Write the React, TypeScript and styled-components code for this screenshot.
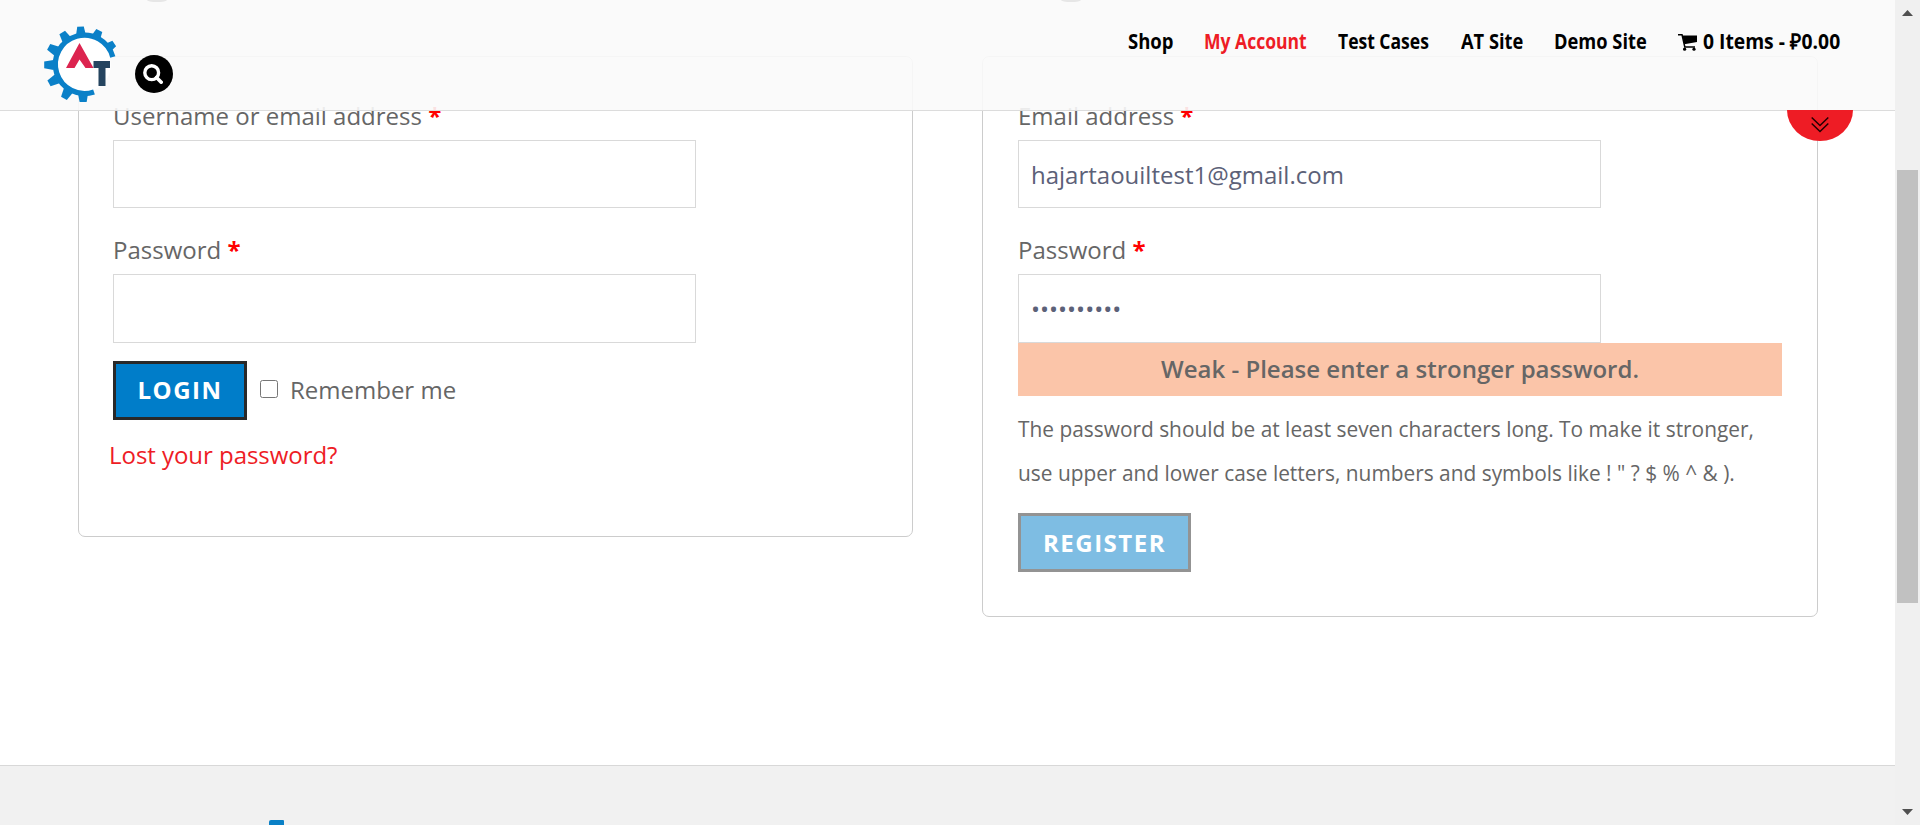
import React from "react";
import styled, { createGlobalStyle } from "styled-components";

const Global = createGlobalStyle`
  * { box-sizing: border-box; }
  body { margin: 0; background: #fff; overflow: hidden; font-family: "Open Sans", sans-serif; color: #666; }
`;

const Shell = styled.div`
  display: flex;
  height: 825px;
`;

const Page = styled.div`
  position: relative;
  flex: 1;
  display: flex;
  flex-direction: column;
  overflow: hidden;
`;

const Header = styled.header`
  position: absolute;
  inset: 0 0 auto 0;
  height: 111px;
  z-index: 2;
  display: flex;
  justify-content: space-between;
  padding: 0 55px 0 43px;
  background: rgba(249, 249, 249, 0.9);
  border-bottom: 1px solid #dcdcdc;
`;

const Brand = styled.div`
  display: flex;
  align-items: flex-start;
  gap: 16px;
  padding-top: 26px;
`;

const SearchButton = styled.button`
  display: flex;
  align-items: center;
  justify-content: center;
  width: 38px;
  height: 38px;
  margin-top: 29px;
  padding: 0 3px 0 0;
  border: 0;
  border-radius: 50%;
  background: #000;
`;

const Nav = styled.nav`
  display: flex;
  height: 82px;
  align-items: center;
  gap: 31px;
`;

const NavLink = styled.a<{ $width: number; $active?: boolean }>`
  display: flex;
  align-items: center;
  gap: 6px;
  width: ${(p) => p.$width}px;
  white-space: nowrap;
  font: 700 21.5px "Open Sans", sans-serif;
  color: ${(p) => (p.$active ? "#ee1c25" : "#000")};
  svg { flex-shrink: 0; margin-top: 2px; }
`;

const NavText = styled.span<{ $scale: number }>`
  display: inline-block;
  padding-bottom: 2px;
  transform: scaleX(${(p) => p.$scale});
  transform-origin: left center;
`;

const Tab = styled.button`
  position: absolute;
  z-index: 3;
  top: 110px;
  right: 42px;
  display: flex;
  justify-content: center;
  width: 66px;
  height: 31px;
  padding: 6px 0 0;
  border: 0;
  border-radius: 0 0 33px 33px / 0 0 31px 31px;
  background: #ee1c25;
`;

const Headings = styled.div`
  display: flex;
  flex-shrink: 0;
  height: 56px;
  padding-left: 147px;
  gap: 894px;
`;

const Descender = styled.span`
  width: 20px;
  height: 2px;
  border-radius: 0 0 10px 10px / 0 0 2px 2px;
  background: #333;
`;

const Columns = styled.main`
  display: grid;
  flex-shrink: 0;
  grid-template-columns: 835px 836px;
  align-items: start;
  column-gap: 69px;
  padding: 0 77px 0 78px;
  height: 709px;
`;

const Card = styled.form<{ $height: number; $inset: number }>`
  display: flex;
  flex-direction: column;
  height: ${(p) => p.$height}px;
  padding: 36px 35px 0 ${(p) => p.$inset}px;
  border: 1px solid #ccc;
  border-radius: 7px;
`;

const Label = styled.label`
  height: 47px;
  line-height: 45px;
  font-size: 24px;
`;

const Required = styled.b`
  color: #f00;
`;

const Input = styled.input<{ $last?: boolean }>`
  width: 583px;
  height: ${(p) => (p.$last ? 69 : 68)}px;
  margin-bottom: ${(p) => (p.$last ? 0 : 19)}px;
  padding: 0 12px;
  border: 1px solid #d9d9d9;
  border-radius: 0;
  outline: 0;
  background: #fff;
  color: #5c6178;
  font: 24px "Open Sans", sans-serif;
`;

const Actions = styled.div`
  display: flex;
  align-items: center;
  margin-top: 18px;
`;

const Button = styled.button<{ $width: number }>`
  flex-shrink: 0;
  width: ${(p) => p.$width}px;
  height: 59px;
  padding: 0 0 2px;
  border: 3px solid #292929;
  background: #007dc9;
  color: #fff;
  font: 700 24px "Open Sans", sans-serif;
  letter-spacing: 1.5px;
  &:disabled {
    padding: 0;
    opacity: 0.5;
  }
`;

const Checkbox = styled.input`
  width: 18px;
  height: 18px;
  margin: 0 12px 3px 13px;
`;

const Remember = styled.span`
  padding-bottom: 2px;
  font-size: 24px;
`;

const LostLink = styled.a`
  margin: 15px 0 0 -4px;
  line-height: 40px;
  font-size: 24px;
  letter-spacing: -0.04px;
  color: #ee1c25;
`;

const Strength = styled.div`
  height: 53px;
  line-height: 51px;
  background: #fbc5a9;
  text-align: center;
  font-size: 24px;
  font-weight: 600;
`;

const Hint = styled.p`
  margin: 11px 0 18px;
  height: 88px;
  line-height: 44px;
  font-size: 20.88px;
  white-space: nowrap;
`;

const Footer = styled.footer`
  flex: 1 0 auto;
  padding: 54px 0 0 269px;
  border-top: 1px solid #d8d8d8;
  background: #f1f1f1;
`;

const FooterLogo = styled.div`
  width: 15px;
  height: 5px;
  border-radius: 2px 1px 0 0;
  background: #0a80c6;
`;

const Scrollbar = styled.div`
  display: flex;
  flex-direction: column;
  align-items: center;
  justify-content: space-between;
  width: 25px;
  padding: 10px 0;
  background: #f0f0f0;
`;

const Thumb = styled.div`
  width: 21px;
  height: 433px;
  margin: 154px 0 auto;
  background: #c1c1c1;
`;

const Logo = () => (
  <svg width="76" height="76" viewBox="43 26 76 76">
    <circle cx="82.800" cy="64.800" r="28" fill="#fff" />
    <path
      d="M112.800 57 A29.200 29.200 0 1 0 94 92"
      fill="none"
      stroke="#0a80c8"
      strokeWidth="5.300"
    />
    <g fill="#0a80c8">
      {[-93, -64, -34, -122, -152, 180, 151, 119, 89].map((a) => (
        <path
          key={a}
          transform={`translate(82.500 64.900) rotate(${a})`}
          d="M29 -5 L38.300 -3.300 V3.300 L29 5 Z"
        />
      ))}
    </g>
    <path d="M79.500 43 L93.500 68 H85.500 L79.500 59.500 L74.500 68 H66 Z" fill="#dc244f" />
    <path d="M93.500 61 H110 V68 H105.500 V86 H98.500 V68 H93.500 Z" fill="#25445f" />
  </svg>
);

const SearchIcon = () => (
  <svg width="20" height="20" viewBox="0 0 20 20" fill="none" stroke="#fff">
    <circle cx="8.700" cy="8.700" r="6.900" strokeWidth="3.400" />
    <path d="M13.500 13.500 L18.200 18.200" strokeWidth="3.600" strokeLinecap="round" />
  </svg>
);

const CartIcon = () => (
  <svg width="19" height="17" viewBox="0 0 19 17">
    <path d="M0 0.700 H4 L6.800 13 H17" fill="none" stroke="#000" strokeWidth="1.500" />
    <path d="M4.300 1.500 H19 V8 L6.300 10.200 Z" />
    <circle cx="6.600" cy="15.200" r="1.600" />
    <circle cx="16" cy="15.200" r="1.600" />
  </svg>
);

const Star = () => <Required>*</Required>;

const links = [
  { text: "Shop", width: 45, scale: 0.86 },
  { text: "My Account", width: 103, scale: 0.815, active: true },
  { text: "Test Cases", width: 92, scale: 0.815 },
  { text: "AT Site", width: 62, scale: 0.85 },
  { text: "Demo Site", width: 93, scale: 0.85 },
];

export default function App() {
  return (
    <Shell>
      <Global />
      <Page>
        <Header>
          <Brand>
            <Logo />
            <SearchButton aria-label="Search"><SearchIcon /></SearchButton>
          </Brand>
          <Nav>
            {links.map((l) => (
              <NavLink key={l.text} $width={l.width} $active={l.active}>
                <NavText $scale={l.scale}>{l.text}</NavText>
              </NavLink>
            ))}
            <NavLink $width={162}>
              <CartIcon />
              <NavText $scale={0.897}>0 Items - ₽0.00</NavText>
            </NavLink>
          </Nav>
        </Header>
        <Tab aria-label="Expand">
          <svg width="18" height="18" viewBox="0 0 18 18" fill="none" stroke="#200" strokeWidth="1.500">
            <path d="M0.700 1.500 L9 9.500 L17.300 1.500 M0.700 7.500 L9 15.500 L17.300 7.500" />
          </svg>
        </Tab>
        <Headings><Descender /><Descender /></Headings>
        <Columns>
          <Card $height={481} $inset={34}>
            <Label>Username or email address <Star /></Label>
            <Input />
            <Label>Password <Star /></Label>
            <Input $last type="password" />
            <Actions>
              <Button type="button" $width={134}>LOGIN</Button>
              <Checkbox type="checkbox" />
              <Remember>Remember me</Remember>
            </Actions>
            <LostLink>Lost your password?</LostLink>
          </Card>
          <Card $height={561} $inset={35}>
            <Label>Email address <Star /></Label>
            <Input defaultValue="hajartaouiltest1@gmail.com" />
            <Label>Password <Star /></Label>
            <Input $last type="password" defaultValue="abcdefghij" />
            <Strength>Weak - Please enter a stronger password.</Strength>
            <Hint>
              The password should be at least seven characters long. To make it stronger,
              <br />
              use upper and lower case letters, numbers and symbols like ! " ? $ % ^ &amp; ).
            </Hint>
            <Button type="button" $width={173} disabled>REGISTER</Button>
          </Card>
        </Columns>
        <Footer><FooterLogo /></Footer>
      </Page>
      <Scrollbar>
        <svg width="11" height="6"><path d="M0 6 L5.500 0 L11 6 Z" fill="#505050" /></svg>
        <Thumb />
        <svg width="11" height="6"><path d="M0 0 L5.500 6 L11 0 Z" fill="#505050" /></svg>
      </Scrollbar>
    </Shell>
  );
}
